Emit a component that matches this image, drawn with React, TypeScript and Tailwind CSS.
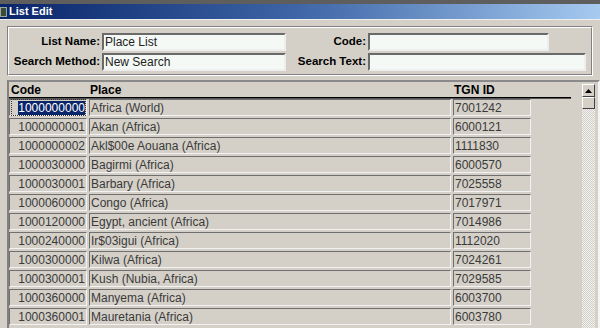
import React from "react";

const rows = [
  ["1000000000", "Africa (World)", "7001242"],
  ["1000000001", "Akan (Africa)", "6000121"],
  ["1000000002", "Akl$00e Aouana (Africa)", "1111830"],
  ["1000030000", "Bagirmi (Africa)", "6000570"],
  ["1000030001", "Barbary (Africa)", "7025558"],
  ["1000060000", "Congo (Africa)", "7017971"],
  ["1000120000", "Egypt, ancient (Africa)", "7014986"],
  ["1000240000", "Ir$03igui (Africa)", "1112020"],
  ["1000300000", "Kilwa (Africa)", "7024261"],
  ["1000300001", "Kush (Nubia, Africa)", "7029585"],
  ["1000360000", "Manyema (Africa)", "6003700"],
  ["1000360001", "Mauretania (Africa)", "6003780"],
];

const cell =
  "h-[17px] border border-t-[#6f6f6f] border-l-[#6f6f6f] border-b-[#f2f2f2] border-r-[#f2f2f2] flex items-center text-[12px] text-[#3a3a3a] leading-none";

const input =
  "h-[18px] bg-[#f5f9f5] border-2 border-t-[#6a6a6a] border-l-[#6a6a6a] border-b-[#eeeeee] border-r-[#eeeeee] flex items-center pl-[1px] text-[12px] text-[#222] leading-none";

const Field = ({ label, value, lw, iw }: { label: string; value: string; lw: string; iw: string }) => (
  <div className="flex items-center">
    <div className={`${lw} text-right pr-[2px] text-[11.5px] font-bold text-black`}>{label}</div>
    <div className={`${input} ${iw}`}>{value}</div>
  </div>
);

export default function App() {
  return (
    <div
      className="w-[600px] h-[328px] overflow-hidden bg-[#d4d0c8] flex flex-col"
      style={{ fontFamily: '"Liberation Sans", Arial, sans-serif' }}
    >
      <div className="h-[4px] bg-[#5e5e5e] shrink-0" />
      <div className="h-[15px] shrink-0 flex items-center bg-gradient-to-r from-[#0a246a] via-[#3f66a6] to-[#a6caf0]">
        <div className="w-[7px] h-[10px] bg-[#3c4a3a] border border-[#9aa89a] mr-[2px]" />
        <span className="text-white text-[11px] font-bold leading-none">List Edit</span>
      </div>
      <div className="h-[1px] bg-[#eeeeee] shrink-0" />

      <div className="mx-[7px] mt-[6px] h-[50px] shrink-0 border border-t-[#808080] border-l-[#808080] border-b-white border-r-white">
        <div className="h-full border border-t-white border-l-white border-b-[#808080] border-r-[#808080] pt-[5px] flex flex-col gap-[2px]">
          <div className="flex">
            <Field label="List Name:" value="Place List" lw="w-[93px]" iw="w-[184px]" />
            <Field label="Code:" value="" lw="w-[82px]" iw="w-[181px]" />
          </div>
          <div className="flex">
            <Field label="Search Method:" value="New Search" lw="w-[93px]" iw="w-[184px]" />
            <Field label="Search Text:" value="" lw="w-[82px]" iw="w-[218px]" />
          </div>
        </div>
      </div>

      <div className="ml-[7px] mt-[4px] flex-1 flex border-t-2 border-l-2 border-t-[#8a8a8a] border-l-[#808080] border-r-2 border-r-[#f4f4f4]">
        <div className="flex-1 flex flex-col">
          <div className="w-[562px] h-[15px] flex items-center text-[12px] font-bold text-black leading-none">
            <span className="ml-[2px] w-[79px]">Code</span>
            <span className="w-[364px]">Place</span>
            <span>TGN ID</span>
          </div>
          <div className="w-[562px] h-[2px] bg-black border-b border-b-[#555]" />
          <div className="flex flex-col">
            {rows.map((r, i) => (
              <div key={r[0]} className="h-[19px] flex gap-[2px]">
                <div className={`${cell} w-[78px] justify-end pr-[1px]`}>
                  {i === 0 ? (
                    <span className="outline-1 outline-dotted outline-[#333] pl-[6px] h-[15px] flex items-center">
                      <span className="bg-[#0a246a] text-white h-[14px] flex items-center">{r[0]}</span>
                    </span>
                  ) : (
                    r[0]
                  )}
                </div>
                <div className={`${cell} w-[362px] pl-[1px]`}>{r[1]}</div>
                <div className={`${cell} w-[78px] pl-[1px]`}>{r[2]}</div>
              </div>
            ))}
          </div>
        </div>
        <div className="w-[16px] pt-[2px] flex flex-col">
          <div className="h-[13px] w-[13px] bg-[#d4d0c8] border border-t-white border-l-white border-b-[#404040] border-r-[#404040] flex items-center justify-center">
            <svg width="7" height="4" viewBox="0 0 7 4">
              <path d="M3.5 0 L7 4 L0 4 Z" fill="#000" />
            </svg>
          </div>
          <div className="h-[12px] w-[13px] bg-[#d4d0c8] border border-t-white border-l-white border-b-[#404040] border-r-[#404040]" />
          <div className="flex-1 w-[13px] bg-[repeating-conic-gradient(#d4d0c8_0_25%,#f0f0f0_0_50%)] bg-[length:2px_2px]" />
        </div>
      </div>
    </div>
  );
}
